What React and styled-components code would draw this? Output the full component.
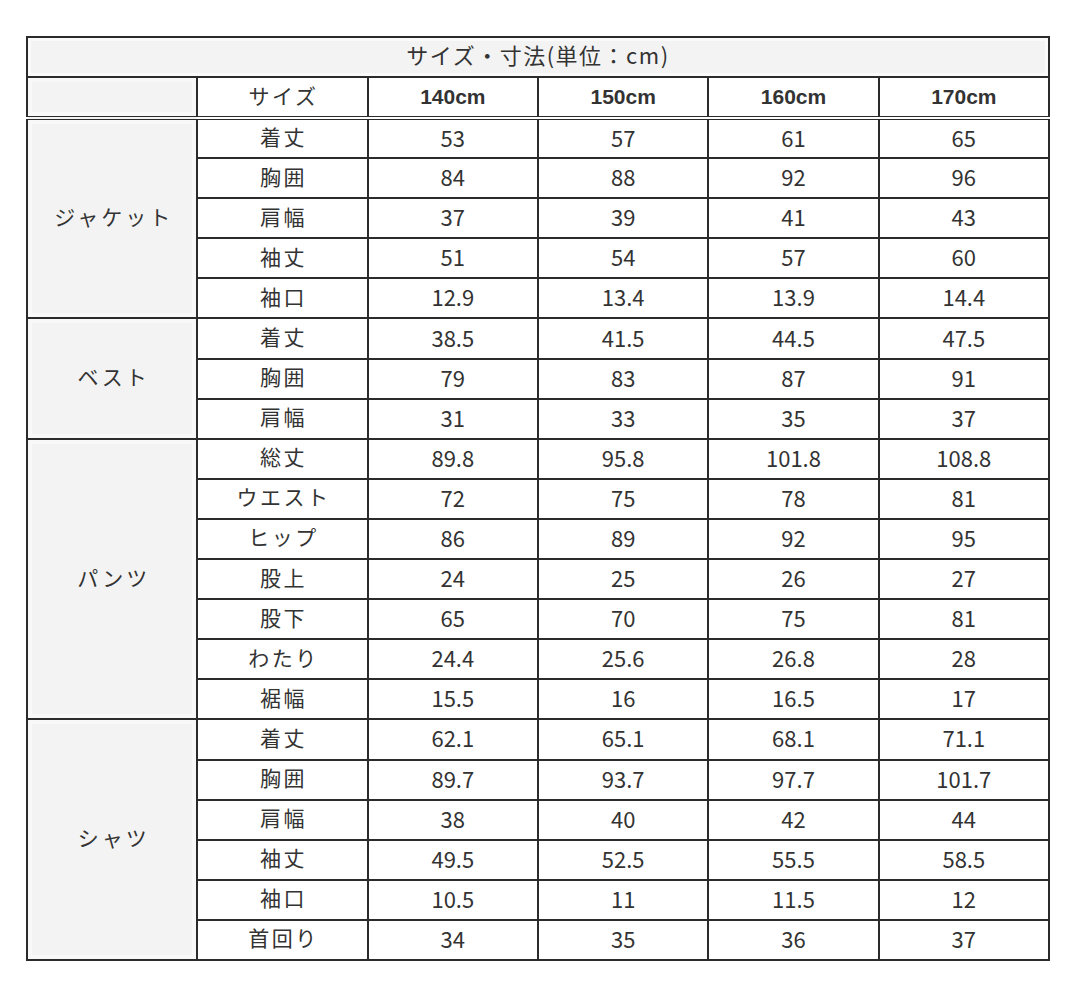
import React from 'react';
import styled, { createGlobalStyle } from "styled-components";

const GlobalStyle = createGlobalStyle`
    body {
        margin: 0;
        background: #fff;
        font-family: "Noto Sans CJK JP", "Noto Sans", sans-serif;
    }
`

const sizes = ["140cm", "150cm", "160cm", "170cm"];

const groups = [
    {
        name: "ジャケット",
        rows: [
            ["着丈", "53", "57", "61", "65"],
            ["胸囲", "84", "88", "92", "96"],
            ["肩幅", "37", "39", "41", "43"],
            ["袖丈", "51", "54", "57", "60"],
            ["袖口", "12.9", "13.4", "13.9", "14.4"],
        ],
    },
    {
        name: "ベスト",
        rows: [
            ["着丈", "38.5", "41.5", "44.5", "47.5"],
            ["胸囲", "79", "83", "87", "91"],
            ["肩幅", "31", "33", "35", "37"],
        ],
    },
    {
        name: "パンツ",
        rows: [
            ["総丈", "89.8", "95.8", "101.8", "108.8"],
            ["ウエスト", "72", "75", "78", "81"],
            ["ヒップ", "86", "89", "92", "95"],
            ["股上", "24", "25", "26", "27"],
            ["股下", "65", "70", "75", "81"],
            ["わたり", "24.4", "25.6", "26.8", "28"],
            ["裾幅", "15.5", "16", "16.5", "17"],
        ],
    },
    {
        name: "シャツ",
        rows: [
            ["着丈", "62.1", "65.1", "68.1", "71.1"],
            ["胸囲", "89.7", "93.7", "97.7", "101.7"],
            ["肩幅", "38", "40", "42", "44"],
            ["袖丈", "49.5", "52.5", "55.5", "58.5"],
            ["袖口", "10.5", "11", "11.5", "12"],
            ["首回り", "34", "35", "36", "37"],
        ],
    },
];

function App() {
    return (
        <Page>
            <GlobalStyle />
            <Table>
                <colgroup>
                    {[0, 1, 2, 3, 4, 5].map((i) => <col key={i} />)}
                </colgroup>
                <thead>
                    <tr>
                        <Title colSpan={6}>サイズ・寸法(単位：cm)</Title>
                    </tr>
                    <HeadRow>
                        <GrayCell />
                        <Label>サイズ</Label>
                        {sizes.map((s) => <SizeHead key={s}>{s}</SizeHead>)}
                    </HeadRow>
                </thead>
                <tbody>
                    {groups.map((group) =>
                        group.rows.map((row, i) => (
                            <Row key={group.name + i}>
                                {i === 0 && (
                                    <GrayCell rowSpan={group.rows.length}>{group.name}</GrayCell>
                                )}
                                <Label>{row[0]}</Label>
                                {row.slice(1).map((v, j) => <Value key={j}>{v}</Value>)}
                            </Row>
                        ))
                    )}
                </tbody>
            </Table>
        </Page>
    )
}

const Page = styled.div`
    padding: 36px 0 0 26px;
`

const Table = styled.table`
    width: 1024px;
    border-collapse: collapse;
    table-layout: fixed;
    border: 2px solid #2b2b2b;
    color: #333;

    col {
        width: 16.666%;
    }

    td, th {
        border: 2px solid #2b2b2b;
        text-align: center;
        vertical-align: middle;
        padding: 0 0 4px;
        font-size: 21px;
        font-weight: 400;
        line-height: 1;
        box-sizing: border-box;
    }
`

const Title = styled.th`
    height: 40px;
    background: #f3f3f3;
    box-shadow: inset 0 0 0 3px #fafafa;

    && {
        font-size: 22px;
        letter-spacing: 1.5px;
        padding-bottom: 6px;
    }
`

const HeadRow = styled.tr`
    height: 41px;

    th, td {
        height: 41px;
        border-bottom: 4px double #2b2b2b;
    }
`

const Row = styled.tr`
    height: 40.1px;
`

const GrayCell = styled.td`
    background: #f3f3f3;
    box-shadow: inset 0 0 0 4px #f8f8f8;

    && {
        letter-spacing: 3px;
        padding-left: 3px;
    }
`

const Label = styled.td`
    && {
        letter-spacing: 2.5px;
        padding-left: 2px;
    }
`

const SizeHead = styled.th`
    && {
        font-family: "Liberation Sans", "Noto Sans", sans-serif;
        font-weight: 700;
        font-size: 21px;
        padding-bottom: 2px;
    }
`

const Value = styled.td`
    && {
        font-size: 22px;
    }
`

export default App;
